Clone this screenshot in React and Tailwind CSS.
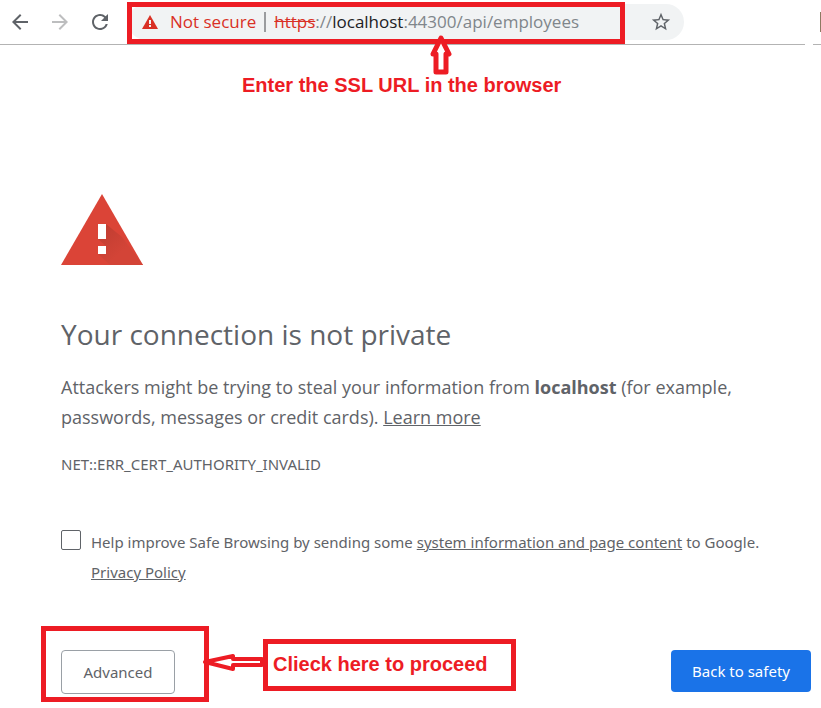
import React, { useState } from "react";
import {
  MdArrowBack,
  MdArrowForward,
  MdRefresh,
  MdStarBorder,
} from "react-icons/md";

function SmallWarning() {
  return (
    <svg width="16" height="14" viewBox="0 0 16 14" aria-hidden="true">
      <path d="M8 0L16 14H0z" fill="#d93025" />
      <path d="M7 5h2v4H7zM7 10h2v2H7z" fill="#f1f3f4" />
    </svg>
  );
}

function BigWarning() {
  return (
    <svg width="82" height="71" viewBox="0 0 82 71" aria-hidden="true">
      <defs>
        <linearGradient id="shade" x1="0" y1="0" x2="1" y2="1">
          <stop offset="0" stopColor="#bd3c30" />
          <stop offset="0.6" stopColor="#d34437" />
        </linearGradient>
      </defs>
      <path d="M41 0L82 71H0z" fill="#db4437" />
      <path
        d="M45 30L61 43L82 71H49L37 60L45 52L37 45z"
        fill="url(#shade)"
      />
      <path d="M37 30h8v15h-8zM37 52h8v8h-8z" fill="#fff" />
    </svg>
  );
}

function Toolbar() {
  return (
    <header>
      <div className="flex h-11 items-center pl-2">
        <nav className="flex gap-4 text-[#5f6368]">
          <button type="button" aria-label="Back">
            <MdArrowBack size={24} />
          </button>
          <button type="button" aria-label="Forward" className="text-[#bdbebf]">
            <MdArrowForward size={24} />
          </button>
          <button type="button" aria-label="Reload">
            <MdRefresh size={24} />
          </button>
        </nav>

        <div className="relative ml-4 flex h-9 min-w-0 flex-1 items-center rounded-full bg-[#f1f3f4] pr-3 pl-3.5 text-[17px]">
          <SmallWarning />
          <span className="ml-3 whitespace-nowrap text-[#d93025]">
            Not secure
          </span>
          <span className="mx-2 h-5 w-0.5 bg-[#9a9c9f]" />
          <span className="whitespace-nowrap text-[#80868b]">
            <s className="text-[#d93025]">https</s>://
            <span className="text-[#202124]">localhost</span>
            :44300/api/employees
          </span>
          <button
            type="button"
            aria-label="Bookmark this page"
            className="ml-auto text-[#5f6368]"
          >
            <MdStarBorder size={22} />
          </button>
          {/* highlight round the address */}
          <div className="pointer-events-none absolute -top-0.5 -bottom-1 right-[59px] -left-px border-5 border-[#ed1c24]" />
        </div>

        <div className="flex w-[137px] justify-end">
          <span className="h-5 w-px bg-[#8d7a62]" />
        </div>
      </div>
      <div className="flex gap-2">
        <span className="h-px flex-1 bg-[#b3b3b3]" />
        <span className="h-px w-2 bg-[#b3b3b3]" />
      </div>
    </header>
  );
}

function UpArrow() {
  return (
    <svg
      className="absolute -top-9 left-[187px]"
      width="24"
      height="42"
      viewBox="0 0 24 42"
      aria-hidden="true"
    >
      <path
        d="M12 3L20 19H17V37H7V19H4z"
        fill="#fff"
        stroke="#ed1c24"
        strokeWidth="5"
        strokeLinejoin="round"
      />
    </svg>
  );
}

function LeftArrow() {
  return (
    <svg
      className="absolute top-2 -left-[67px]"
      width="64"
      height="22"
      viewBox="0 0 64 22"
      aria-hidden="true"
    >
      <path
        d="M4 10L32 4V7H61V13H32V17z"
        fill="#fff"
        stroke="#ed1c24"
        strokeWidth="4"
        strokeLinejoin="round"
      />
    </svg>
  );
}

function App() {
  const [report, setReport] = useState(false);

  return (
    <div className="bg-white font-['Open_Sans','Noto_Sans',sans-serif] text-[#5f6368]">
      <Toolbar />

      <main className="pr-2.5 pb-3.5 pl-[61px]">
        <div className="flex pt-[26px] pl-[181px]">
          <p className="relative font-['Liberation_Sans',sans-serif] text-xl font-bold whitespace-nowrap text-[#ed1c24]">
            Enter the SSL URL in the browser
            <UpArrow />
          </p>
        </div>

        <div className="mt-[95px]">
          <BigWarning />
        </div>

        <h1 className="mt-[51px] text-[28px]/9">
          Your connection is not private
        </h1>

        <p className="mt-5 text-lg/[30px]">
          Attackers might be trying to steal your information from{" "}
          <strong>localhost</strong> (for example, passwords, messages or credit
          cards).{" "}
          <a href="#learn" className="underline">
            Learn more
          </a>
        </p>

        <p className="mt-5 font-['Noto_Sans',sans-serif] text-[15px]/6">
          NET::ERR_CERT_AUTHORITY_INVALID
        </p>

        <div className="mt-[51px] flex gap-2.5">
          <input
            id="report"
            type="checkbox"
            checked={report}
            onChange={(e) => setReport(e.target.checked)}
            className="mt-[3px] size-5 shrink-0 appearance-none rounded-xs border border-[#5f6368] bg-white checked:bg-[#1a73e8]"
          />
          <label
            htmlFor="report"
            className="font-['Noto_Sans',sans-serif] text-[15px]/[30px]"
          >
            Help improve Safe Browsing by sending some{" "}
            <a href="#info" className="underline">
              system information and page content
            </a>{" "}
            to Google.
            <br />
            <a href="#privacy" className="underline">
              Privacy Policy
            </a>
          </label>
        </div>

        <div className="mt-[63px] flex items-start">
          <div className="relative">
            <button
              type="button"
              className="block h-11 w-[114px] rounded border border-[#9aa0a6] font-['Noto_Sans',sans-serif] text-[15px]"
            >
              Advanced
            </button>
            {/* highlight round the button */}
            <div className="pointer-events-none absolute -top-6 -right-[34px] -bottom-2 -left-5 border-5 border-[#ed1c24]" />
          </div>

          <p className="relative -mt-[11px] ml-[88px] w-[253px] border-5 border-[#ed1c24] pt-[5px] pb-[7px] pl-[5px] font-['Liberation_Sans',sans-serif] text-xl/[30px] font-bold whitespace-nowrap text-[#ed1c24]">
            Clieck here to proceed
            <LeftArrow />
          </p>

          <button
            type="button"
            className="ml-auto h-[42px] w-[140px] rounded bg-[#1a73e8] font-['Noto_Sans',sans-serif] text-[15px] text-white"
          >
            Back to safety
          </button>
        </div>
      </main>
    </div>
  );
}

export default App;
